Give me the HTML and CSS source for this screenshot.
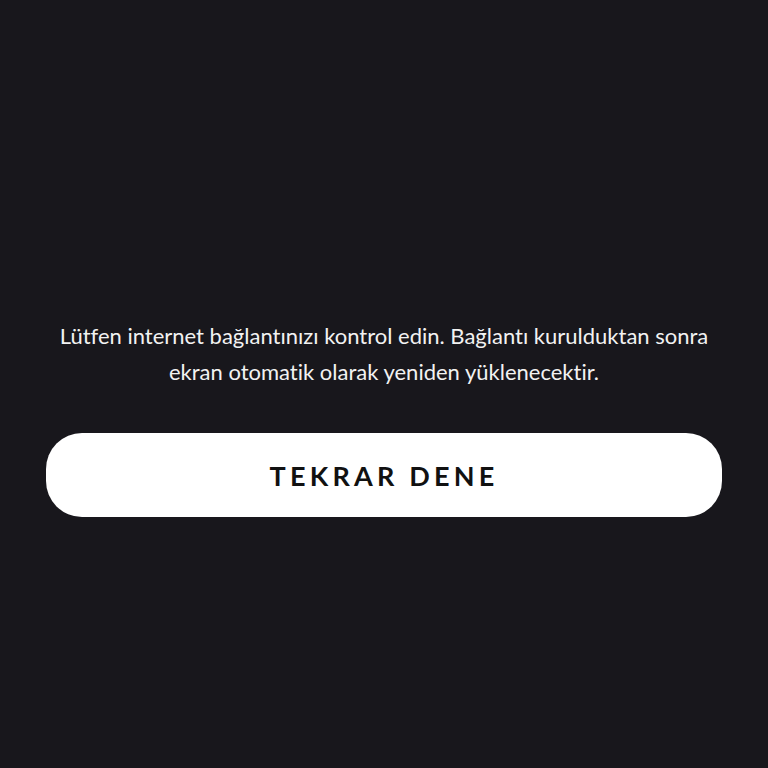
FILE: index.html
```html
<!DOCTYPE html>
<html lang="tr">
  <head>
    <meta charset="UTF-8">
    <title>Bağlantı hatası</title>
    <link rel="stylesheet" href="styles.css">
  </head>
  <body>
    <div class="offline">
      <p class="message">
        Lütfen internet bağlantınızı kontrol edin. Bağlantı kurulduktan sonra
        ekran otomatik olarak yeniden yüklenecektir.
      </p>
      <button class="retry" type="button">TEKRAR DENE</button>
    </div>
  </body>
</html>
```

FILE: styles.css
```css
* {
  margin: 0;
  padding: 0;
  box-sizing: border-box;
}

html, body {
  height: 100%;
}

body {
  background: #18171c;
  font-family: Lato, "Open Sans", sans-serif;
  font-variant-ligatures: none;
  color: #fff;
}

.offline {
  display: flex;
  flex-direction: column;
  align-items: center;
  padding: 318px 46px 0;
}

.message {
  max-width: 676px;
  font-size: 22px;
  line-height: 36px;
  text-align: center;
  color: #f2f2f2;
}

.retry {
  width: 100%;
  height: 84px;
  margin-top: 43px;
  border: 0;
  border-radius: 36px;
  background: #fff;
  color: #111;
  font-family: Lato, "Open Sans", sans-serif;
  font-size: 27px;
  font-weight: 700;
  letter-spacing: 4.2px;
}
```
